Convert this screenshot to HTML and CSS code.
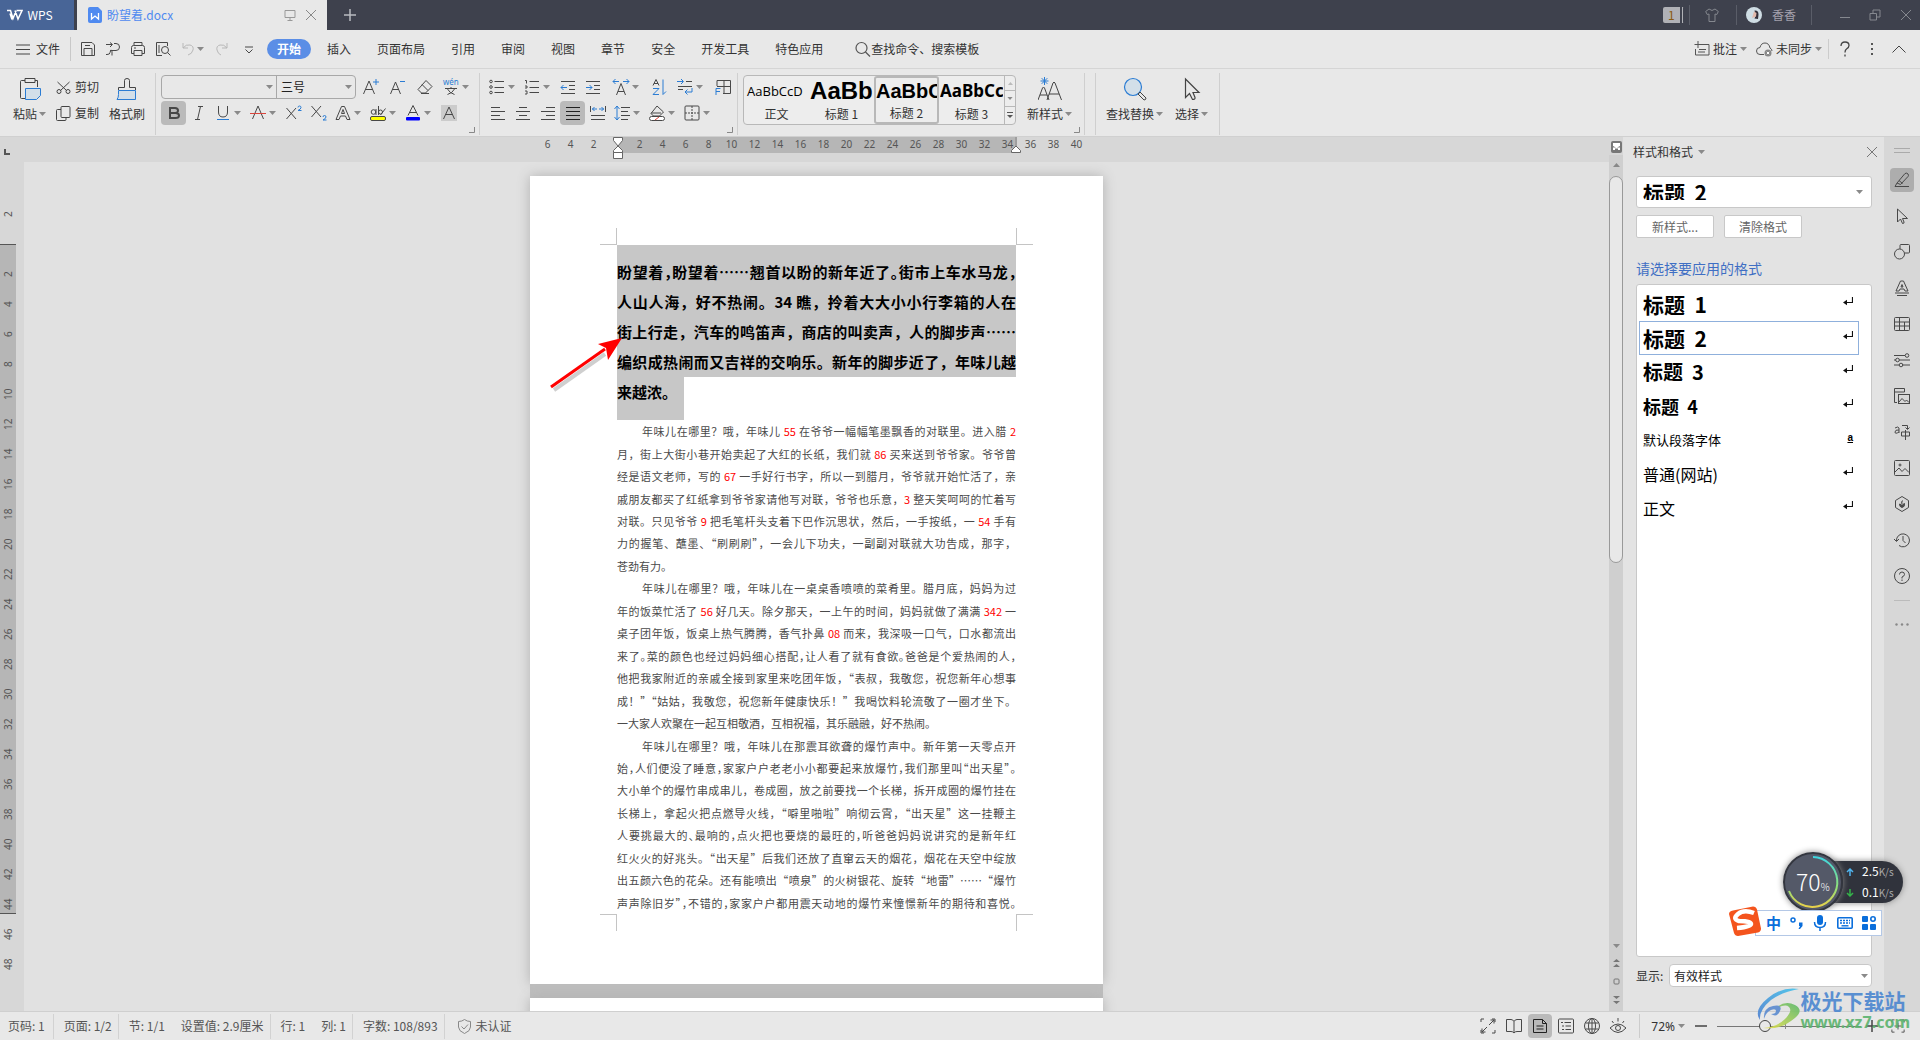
FILE: index.html
```html
<!DOCTYPE html>
<html lang="zh-CN">
<head>
<meta charset="utf-8">
<title>盼望着.docx - WPS</title>
<link rel="stylesheet" href="styles.css">
</head>
<body>
<svg class="defs" aria-hidden="true">
  <symbol id="caret" viewBox="0 0 7 4"><path d="M0 0h7L3.500 4z" fill="#8a8a8a"/></symbol>
  <symbol id="ret" viewBox="0 0 10 9"><path d="M9.500 0v5.500H2" fill="none" stroke="#111" stroke-width="1.200"/><path d="M0 5.500l4-2.800v5.600z" fill="#111"/></symbol>
  <symbol id="launch" viewBox="0 0 6 6"><path d="M5.500 0v5.500H0" fill="none" stroke="#888"/></symbol>
  <symbol id="cross" viewBox="0 0 12 12"><path d="M1 1l10 10M11 1L1 11" fill="none" stroke="currentColor"/></symbol>
</svg>

<header class="titlebar">
  <button class="wps"><svg width="16" height="12" viewBox="0 0 16 12"><path d="M0 1.500h3.500l2.500 8 3-7.500M3 4.500L5 10.500M8 1.500l3 8.500 4-8.500h-5.500" fill="none" stroke="#fff" stroke-width="1.500"/></svg>WPS</button>
  <div class="tab">
    <svg width="14" height="16" viewBox="0 0 14 16"><path d="M2 0h8l4 4v10a2 2 0 0 1-2 2H2a2 2 0 0 1-2-2V2a2 2 0 0 1 2-2z" fill="#4f8af0"/><path d="M3.500 6v6l3.500-3 3.500 3V6" fill="none" stroke="#fff" stroke-width="1.300"/></svg>
    <span class="name">盼望着.docx</span>
    <svg width="12" height="12" viewBox="0 0 12 12" fill="none" stroke="#999"><path d="M1 1.500h10v7H1zM6 8.500v2.500M3.500 11.500h5"/></svg>
    <button class="x" aria-label="关闭标签"><svg width="12" height="12"><use href="#cross"/></svg></button>
  </div>
  <button class="add" aria-label="新建"><svg width="12" height="12" viewBox="0 0 12 12"><path d="M6 0v12M0 6h12" stroke="#b8bac0" stroke-width="1.500"/></svg></button>
  <div class="sys">
    <span class="count">1</span>
    <i></i>
    <svg width="14" height="14" viewBox="0 0 14 14" fill="none" stroke="#85888f"><path d="M4 1L.700 3.500l1.500 3L4 6v7.500h6V6l1.800.500 1.500-3L10 1Q7 4 4 1z"/></svg>
    <i></i>
    <svg width="16" height="16" viewBox="0 0 16 16"><circle cx="8" cy="8" r="8" fill="#cfdde4"/><path d="M8.500 3.500q4-.500 4 4L12 12l-3.500-.500L9.500 9z" fill="#33303a"/><path d="M8 4.500l2.500 1.500-.5 3.500L6 11l1-3z" fill="#e2b9ab"/></svg>
    <span class="user">香香</span>
    <i></i>
    <button aria-label="最小化"><svg width="12" height="12" viewBox="0 0 12 12"><path d="M1 8.500h10" stroke="#85888f"/></svg></button>
    <button aria-label="还原"><svg width="12" height="12" viewBox="0 0 12 12" fill="none" stroke="#85888f"><path d="M1 4.500h6.500V11H1zM4 4V1h7v7H8"/></svg></button>
    <button aria-label="关闭"><svg width="12" height="12"><use href="#cross"/></svg></button>
  </div>
</header>

<nav class="menubar">
  <button class="file"><svg width="14" height="11" viewBox="0 0 14 11"><path d="M0 1h14M0 5.500h14M0 10h14" stroke="#444"/></svg>文件</button>
  <div class="quick">
    <button aria-label="保存"><svg viewBox="0 0 16 16"><path d="M1.500 1.500h10.500l2.500 2.500v10.500h-13zM4 14V7.500h8V14M5 4.500h5"/></svg></button>
    <button aria-label="输出"><svg viewBox="0 0 16 16"><path d="M1 3.500h6M5 1.500l2.500 2L5 6M9 2.500h2a3.500 3.500 0 0 1 0 7H7q-2 0-2 2t-3 2H1M5 9.500q2-1 2 1v4"/></svg></button>
    <button aria-label="打印"><svg viewBox="0 0 16 16"><path d="M4 4.500v-3h8v3M4 12.500H1.500v-6q0-2 2-2h9q2 0 2 2v6H12M4 9.500h8v5H4zM4 7h2"/></svg></button>
    <button aria-label="打印预览"><svg viewBox="0 0 16 16"><path d="M7 14.500H1.500v-13h11V5M4 4v8"/><circle cx="10" cy="9" r="3.500"/><path d="M12.500 11.500l3 3"/></svg></button>
    <button class="dim wide" aria-label="撤销"><svg viewBox="0 0 16 16"><path d="M3 2v5h5M3 7q3-4 7-3t3 5-5 5"/></svg><svg class="caret"><use href="#caret"/></svg></button>
    <button class="dim" aria-label="恢复"><svg viewBox="0 0 16 16"><path d="M13 2v5H8M13 7q-3-4-7-3t-3 5 4 5"/></svg></button>
    <button aria-label="更多"><svg viewBox="0 0 16 16"><path d="M4 6h8M4.500 8.500L8 12l3.500-3.500"/></svg></button>
  </div>
  <div class="menus">
    <button class="on">开始</button><button>插入</button><button>页面布局</button><button>引用</button><button>审阅</button><button>视图</button><button>章节</button><button>安全</button><button>开发工具</button><button>特色应用</button>
  </div>
  <button class="find"><svg width="16" height="16" viewBox="0 0 16 16" fill="none" stroke="#555" stroke-width="1.200"><circle cx="6.500" cy="7" r="5.500"/><path d="M10.500 11l4.500 4.500"/></svg>查找命令、搜索模板</button>
  <div class="right">
    <button><svg width="16" height="16" viewBox="0 0 16 16" fill="none" stroke="#555"><path d="M6 3.500h9v10.500H1.500V8M4 0v7M.500 3.500h7M4 11h7M5 8.500h7"/></svg>批注<svg class="caret"><use href="#caret"/></svg></button>
    <button><svg width="17" height="15" viewBox="0 0 17 15" fill="none" stroke="#555"><path d="M8 12.500H4a3.500 3.500 0 0 1 0-7Q5 1 9 1t5 5q2 1 2 3"/><circle cx="12" cy="11" r="3.500" fill="#888" stroke="none"/><path d="M10.800 9.800l2.400 2.400m0-2.400l-2.400 2.400" stroke="#fff"/></svg>未同步<svg class="caret"><use href="#caret"/></svg></button>
    <i></i>
    <button aria-label="帮助"><svg width="12" height="16" viewBox="0 0 12 16" fill="none" stroke="#444" stroke-width="1.300"><path d="M2 5q0-4 4-4t4 3.500q0 2-2.500 3.500Q6 9 6 11.500M6 13.500v2"/></svg></button>
    <button aria-label="更多选项"><svg width="4" height="14" viewBox="0 0 4 14" fill="#555"><path d="M1 1h2v2H1zM1 6h2v2H1zM1 11h2v2H1z"/></svg></button>
    <button aria-label="收起功能区"><svg width="14" height="8" viewBox="0 0 14 8" fill="none" stroke="#444"><path d="M.500 7.500L7 1l6.500 6.500"/></svg></button>
  </div>
</nav>

<section class="ribbon">
  <div class="group clip">
    <button class="big"><svg viewBox="0 0 24 24" fill="none" stroke="#444"><path d="M7 3.500H3.500q-1 0-1 1v16q0 1 1 1H7M17 3.500h2.500V10M7 1.500h10v4H7z"/><path d="M7.500 11.500h15v7l-4 4h-11z" fill="#d3dfe9" stroke="#2b7cd3"/></svg><span>粘贴<svg class="caret"><use href="#caret"/></svg></span></button>
    <div class="pair">
      <button><svg width="15" height="15" viewBox="0 0 15 15" fill="none" stroke="#444"><circle cx="3" cy="11.500" r="2"/><circle cx="12" cy="11.500" r="2"/><path d="M1.500 2l9 8.500M13.500 2l-9 8.500"/></svg>剪切</button>
      <button><svg width="15" height="15" viewBox="0 0 15 15" fill="none" stroke="#444"><rect x="5" y=".5" width="9" height="11" rx="1"/><path d="M5 3.500H1.500q-1 0-1 1v9q0 1 1 1H9q1 0 1-1v-2"/></svg>复制</button>
    </div>
    <button class="big"><svg viewBox="0 0 24 24" fill="none" stroke="#444"><path d="M3.500 13v-2.500h6v-7q0-2 2.500-2t2.500 2v7h6V13"/><path d="M3.500 13.500h17v9H2q1.500-2 1.500-5z" fill="#d3dfe9" stroke="#2b7cd3"/></svg><span>格式刷</span></button>
  </div>

  <div class="group font">
    <div class="row spaced">
      <div class="combo">
        <label class="pick face"><select aria-label="字体"><option></option></select><svg class="caret"><use href="#caret"/></svg></label>
        <label class="pick size"><select aria-label="字号"><option>三号</option></select><svg class="caret"><use href="#caret"/></svg></label>
      </div>
      <button aria-label="增大字号"><svg viewBox="0 0 16 16"><path d="M.500 15L6 2l5.500 13M2.500 10.500h7"/><path class="b" d="M13 0v6M10 3h6"/></svg></button>
      <button aria-label="减小字号"><svg viewBox="0 0 16 16"><path d="M.500 15L5.500 3l5 12M2.500 10.500h6.500"/><path class="b" d="M10 2.500h5"/></svg></button>
      <button aria-label="清除格式"><svg viewBox="0 0 16 16"><path d="M9 1.500l6 6-6.500 6.500h-4L1 10.500zM5 5.500l6 6M4 14.500h8"/></svg></button>
      <button class="wide" aria-label="拼音指南"><svg viewBox="0 0 16 16"><text x="0" y="6" class="pin">wén</text><path d="M2 9.500h12M8 8v1.500M4.500 10q2 4 7 5.500M11.500 10q-2 4-7 5.500"/></svg><svg class="caret"><use href="#caret"/></svg></button>
    </div>
    <div class="row">
      <button class="on" aria-label="加粗"><svg viewBox="0 0 16 16"><path d="M4 3h5q3 0 3 2.500T9 8H4zM4 8h5.500Q13 8 13 10.500T9.500 13H4z" stroke-width="2"/></svg></button>
      <button aria-label="倾斜"><svg viewBox="0 0 16 16"><path d="M7 1.500h5M4 14.500h5M9.500 1.500l-3 13"/></svg></button>
      <button class="wide" aria-label="下划线"><svg viewBox="0 0 16 16"><path d="M3.500 1v6q0 5 4.500 5t4.500-5V1"/><path class="b" d="M2 14.500h12"/></svg><svg class="caret"><use href="#caret"/></svg></button>
      <button class="wide" aria-label="删除线"><svg viewBox="0 0 16 16"><path d="M2.500 14L8 1l5.500 13"/><path d="M0 8.500h16" stroke="#d9453c"/></svg><svg class="caret"><use href="#caret"/></svg></button>
      <button aria-label="上标"><svg viewBox="0 0 16 16"><path d="M.500 3l9.500 11M10 3L.500 14"/><path class="b" d="M12 2.500q0-1.500 1.500-1.500T15 2.500t-3 3h3.500"/></svg></button>
      <button aria-label="下标"><svg viewBox="0 0 16 16"><path d="M.500 1L10 12M10 1L.500 12"/><path class="b" d="M12 12q0-1.500 1.500-1.500T15 12t-3 3h3.500"/></svg></button>
      <button class="wide" aria-label="文字效果"><svg viewBox="0 0 16 16"><path d="M1 14.500L6.500 1.500h3L15 14.500h-3L10.500 11h-5L4 14.500zM6.500 8.500h3L8 4.500z"/></svg><svg class="caret"><use href="#caret"/></svg></button>
      <button class="wide" aria-label="突出显示"><svg viewBox="0 0 16 16"><circle cx="3.500" cy="7" r="2.300"/><path d="M6 4v6M8.500 1v9M15.500 3.500l-5 6.500"/><circle cx="10.500" cy="7" r="2"/><rect x=".5" y="11.500" width="15" height="4" rx="1.500" fill="#ff0"/></svg><svg class="caret"><use href="#caret"/></svg></button>
      <button class="wide" aria-label="字体颜色"><svg viewBox="0 0 16 16"><path d="M3 10.500L8 .500l5 10M4.500 7.500h7"/><rect x="1" y="12" width="14" height="3.500" rx="1" fill="#00f" stroke="none"/></svg><svg class="caret"><use href="#caret"/></svg></button>
      <button aria-label="字符底纹"><svg viewBox="0 0 16 16"><path d="M0 0h16v16H0z" fill="#ccc" stroke="none"/><path d="M2.500 14L8 2l5.500 12M4.500 9.500h7"/></svg></button>
    </div>
    <svg class="launch"><use href="#launch"/></svg>
  </div>

  <div class="group para">
    <div class="row cluster">
      <div class="row">
        <button class="wide" aria-label="项目符号"><svg viewBox="0 0 16 16"><circle cx="2" cy="2.500" r="1.300"/><circle cx="2" cy="8" r="1.300"/><circle cx="2" cy="13.500" r="1.300"/><path d="M5.500 2.500H15M5.500 8.500H15M5.500 13.500H15"/></svg><svg class="caret"><use href="#caret"/></svg></button>
        <button class="wide" aria-label="编号"><svg viewBox="0 0 16 16"><path d="M1 1.500h1.500v3M1 7h2v2H1M1 12h2v3H1M5.500 2.500H15M5.500 8.500H15M5.500 13.500H15"/></svg><svg class="caret"><use href="#caret"/></svg></button>
        <button aria-label="减少缩进"><svg viewBox="0 0 16 16"><path d="M1 2.500h14M9 6.500h6M9 10.500h6M1 14.500h14"/><path class="b" d="M1 8.500h6M3.500 6L1 8.500 3.500 11"/></svg></button>
        <button aria-label="增加缩进"><svg viewBox="0 0 16 16"><path d="M1 2.500h14M9 6.500h6M9 10.500h6M1 14.500h14"/><path class="b" d="M1 8.500h6M4.500 6L7 8.500 4.500 11"/></svg></button>
      </div>
      <div class="row spaced">
        <button class="wide" aria-label="中文版式"><svg viewBox="0 0 16 16"><path d="M3.500 16L8 4.500 12.500 16M5 12.500h6"/><path class="b" d="M0 2.500h6M2.500 0L0 2.500 2.500 5M10 2.500h6M13.500 0L16 2.500 13.500 5"/></svg><svg class="caret"><use href="#caret"/></svg></button>
        <button aria-label="排序"><svg viewBox="0 0 16 16"><path d="M2 6.500L5 .500l3 6M3 4.500h4"/><path class="b" d="M2 9.500h6l-6 6h6M12 .500v15l3-3"/></svg></button>
        <button class="wide" aria-label="显示标记"><svg viewBox="0 0 16 16"><path d="M9 2.500h6M1 7.500h14M1 10.500h5"/><path class="b" d="M0 2.500h6M4 0l2.500 2.500L4 5M15 9v4H8M10.500 10.500L8 13l2.500 2.500"/></svg><svg class="caret"><use href="#caret"/></svg></button>
        <button aria-label="制表位"><svg viewBox="0 0 16 16"><path d="M2 7V1.500h13.500v13H8M9 1v13M2 7.500h13"/><path class="b" d="M1 16V9.500h4.500M1 12.500h4"/></svg></button>
      </div>
    </div>
    <div class="row">
      <button aria-label="左对齐"><svg viewBox="0 0 16 16"><path d="M1 2.500h9M1 6.500h14M1 10.500h9M1 14.500h14"/></svg></button>
      <button aria-label="居中"><svg viewBox="0 0 16 16"><path d="M4 2.500h8M1 6.500h14M4 10.500h8M1 14.500h14"/></svg></button>
      <button aria-label="右对齐"><svg viewBox="0 0 16 16"><path d="M6 2.500h9M1 6.500h14M6 10.500h9M1 14.500h14"/></svg></button>
      <button class="on" aria-label="两端对齐"><svg viewBox="0 0 16 16"><path d="M1 2.500h14M1 6.500h14M1 10.500h14M1 14.500h14" stroke="#222"/></svg></button>
      <button aria-label="分散对齐"><svg viewBox="0 0 16 16"><path d="M.500 1v6M15.500 1v6M1 10.500h14M1 14.500h14"/><path class="b" d="M2 4h5M4.500 2L2.500 4l2 2M9 4h5M11.500 2l2 2-2 2"/></svg></button>
      <button class="wide" aria-label="行距"><svg viewBox="0 0 16 16"><path d="M7 2.500h9M7 6.500h7M7 10.500h9M7 14.500h7"/><path class="b" d="M3 1v14M.500 4L3 1l2.500 3M.500 12L3 15l2.500-3"/></svg><svg class="caret"><use href="#caret"/></svg></button>
      <button class="wide" aria-label="底纹"><svg viewBox="0 0 16 16"><path d="M8 1l6.500 6-4 4H4.500L2 8.500zM2 8h10"/><rect x=".5" y="11.500" width="15" height="4" rx="2" fill="#fff"/><path d="M6 15l4-3" stroke="#d9453c"/></svg><svg class="caret"><use href="#caret"/></svg></button>
      <button class="wide" aria-label="边框"><svg viewBox="0 0 16 16"><rect x="1" y="1" width="14" height="14" rx="1"/><path d="M8 1v14M1 8h14" stroke-dasharray="2 1"/></svg><svg class="caret"><use href="#caret"/></svg></button>
    </div>
    <svg class="launch"><use href="#launch"/></svg>
  </div>

  <div class="group styles">
    <div class="gallery">
      <button class="s0"><b>AaBbCcD</b><span>正文</span></button>
      <button class="s1"><b>AaBb</b><span>标题 1</span></button>
      <button class="s2 on"><b>AaBbC</b><span>标题 2</span></button>
      <button class="s3"><b>AaBbCc</b><span>标题 3</span></button>
      <div class="spin">
        <button aria-label="上翻"><svg width="5" height="3" viewBox="0 0 7 4"><path d="M0 4h7L3.500 0z" fill="#bbb"/></svg></button>
        <button aria-label="下翻"><svg width="6" height="3"><use href="#caret"/></svg></button>
        <button aria-label="展开样式"><svg width="6" height="6" viewBox="0 0 6 6"><path d="M0 .500h6" stroke="#555"/><path d="M0 3h6L3 6z" fill="#555"/></svg></button>
      </div>
    </div>
    <button class="big"><svg viewBox="0 0 24 24" fill="none" stroke="#444"><path d="M0 23l4.500-12q1-2 2 0L11 23M2 18h7M9 23l6-17q1-2 2 0l6.500 17M11 17h10"/><path d="M6.500 0v8M2.500 4h8M3.700 1.200l5.600 5.600M9.300 1.200L3.700 6.800" stroke="#2b7cd3"/></svg><span>新样式<svg class="caret"><use href="#caret"/></svg></span></button>
    <svg class="launch"><use href="#launch"/></svg>
  </div>

  <div class="group edit">
    <button class="big"><svg viewBox="0 0 24 24"><circle cx="10" cy="10" r="8.500" fill="#d3dfe9" stroke="#2b7cd3" stroke-width="1.200"/><path d="M15 17l2-2 6 6q0 2-2 2z" fill="none" stroke="#444"/></svg><span>查找替换<svg class="caret"><use href="#caret"/></svg></span></button>
    <button class="big"><svg viewBox="0 0 24 24" fill="none" stroke="#444" stroke-width="1.200"><path d="M5.500 2v18.500l4-4 3 6q3 0 2.500-2l-2-5H19z"/></svg><span>选择<svg class="caret"><use href="#caret"/></svg></span></button>
  </div>
</section>

<main class="work">
  <aside class="vruler">
    <svg class="stop" width="6" height="6" viewBox="0 0 6 6"><path d="M1 0v5h5" fill="none" stroke="#555" stroke-width="2"/></svg>
    <ol><li>2</li><li></li><li>2</li><li>4</li><li>6</li><li>8</li><li>10</li><li>12</li><li>14</li><li>16</li><li>18</li><li>20</li><li>22</li><li>24</li><li>26</li><li>28</li><li>30</li><li>32</li><li>34</li><li>36</li><li>38</li><li>40</li><li>42</li><li>44</li><li>46</li><li>48</li></ol>
  </aside>

  <div class="canvas">
    <div class="hruler">
      <ol><li>6</li><li>4</li><li>2</li><li></li><li>2</li><li>4</li><li>6</li><li>8</li><li>10</li><li>12</li><li>14</li><li>16</li><li>18</li><li>20</li><li>22</li><li>24</li><li>26</li><li>28</li><li>30</li><li>32</li><li>34</li><li>36</li><li>38</li><li>40</li></ol>
      <svg class="ind left" width="10" height="22" viewBox="0 0 10 22" fill="#fff" stroke="#666"><path d="M.500.500h9v3L5 9 .500 3.500zM5 9l4.500 4.500v2h-9v-2zM.500 15.500h9v6h-9z"/></svg>
      <svg class="ind end" width="10" height="16" viewBox="0 0 10 16" fill="#fff" stroke="#666"><path d="M5 0v9M5 9l4.500 4.500v2h-9v-2z"/></svg>
    </div>
    <div class="pages">
      <article class="page">
        <div class="marks top"><span></span><span></span></div>
        <h1>
          <span class="tight">盼望着，盼望着……翘首以盼的新年近了。街市上车水马龙，</span>
          <span>人山人海，好不热闹。34 瞧，拎着大大小小行李箱的人在</span>
          <span>街上行走，汽车的鸣笛声，商店的叫卖声，人的脚步声……</span>
          <span>编织成热闹而又吉祥的交响乐。新年的脚步近了，年味儿越</span>
          <span class="last">来越浓。</span>
        </h1>
        <div class="text">
          <span class="in">年味儿在哪里？哦，年味儿 <em>55</em> 在爷爷一幅幅笔墨飘香的对联里。进入腊 <em>2</em></span>
          <span>月，街上大街小巷开始卖起了大红的长纸，我们就 <em>86</em> 买来送到爷爷家。爷爷曾</span>
          <span>经是语文老师，写的 <em>67</em> 一手好行书字，所以一到腊月，爷爷就开始忙活了，亲</span>
          <span>戚朋友都买了红纸拿到爷爷家请他写对联，爷爷也乐意，<em>3</em> 整天笑呵呵的忙着写</span>
          <span>对联。只见爷爷 <em>9</em> 把毛笔杆头支着下巴作沉思状，然后，一手按纸，一 <em>54</em> 手有</span>
          <span>力的握笔、蘸墨、“刷刷刷”，一会儿下功夫，一副副对联就大功告成，那字，</span>
          <span class="last">苍劲有力。</span>
          <span class="in">年味儿在哪里？哦，年味儿在一桌桌香喷喷的菜肴里。腊月底，妈妈为过</span>
          <span>年的饭菜忙活了 <em>56</em> 好几天。除夕那天，一上午的时间，妈妈就做了满满 <em>342</em> 一</span>
          <span>桌子团年饭，饭桌上热气腾腾，香气扑鼻 <em>08</em> 而来，我深吸一口气，口水都流出</span>
          <span class="tight">来了。菜的颜色也经过妈妈细心搭配，让人看了就有食欲。爸爸是个爱热闹的人，</span>
          <span>他把我家附近的亲戚全接到家里来吃团年饭，“表叔，我敬您，祝您新年心想事</span>
          <span>成！”“姑姑，我敬您，祝您新年健康快乐！”我喝饮料轮流敬了一圈才坐下。</span>
          <span class="last">一大家人欢聚在一起互相敬酒，互相祝福，其乐融融，好不热闹。</span>
          <span class="in">年味儿在哪里？哦，年味儿在那震耳欲聋的爆竹声中。新年第一天零点开</span>
          <span class="tight">始，人们便没了睡意，家家户户老老小小都要起来放爆竹，我们那里叫“出天星”。</span>
          <span>大小单个的爆竹串成串儿，卷成圈，放之前要找一个长梯，拆开成圈的爆竹挂在</span>
          <span>长梯上，拿起火把点燃导火线，“噼里啪啦”响彻云霄，“出天星”这一挂鞭主</span>
          <span class="tight">人要挑最大的、最响的，点火把也要烧的最旺的，听爸爸妈妈说讲究的是新年红</span>
          <span>红火火的好兆头。“出天星”后我们还放了直窜云天的烟花，烟花在天空中绽放</span>
          <span>出五颜六色的花朵。还有能喷出“喷泉”的火树银花、旋转“地雷”……“爆竹</span>
          <span class="tight">声声除旧岁”，不错的，家家户户都用震天动地的爆竹来憧憬新年的期待和喜悦。</span>
        </div>
        <div class="marks bottom"><span></span><span></span></div>
        <svg class="arrow" width="80" height="60" viewBox="0 0 80 60"><path d="M2 51L53 15" stroke="#777" stroke-width="4" transform="translate(2 3)" opacity=".35"/><path d="M1 51L55 13" stroke="#f00" stroke-width="3"/><path d="M72 2L48 8l8 4 2 12z" fill="#f00"/></svg>
      </article>
      <div class="break"></div>
      <article class="page next"></article>
    </div>
  </div>

  <div class="scroll">
    <svg class="rul" width="11" height="12" viewBox="0 0 11 12"><rect width="11" height="12" rx="2" fill="#777"/><path d="M2 2h7v3L6 6.500h3V9H7V7.500H4V9H2V6.500h3L2 5z" fill="#fff"/></svg>
    <div class="track">
      <svg width="7" height="4" viewBox="0 0 7 4"><path d="M0 4h7L3.500 0z" fill="#888"/></svg>
      <div class="thumb"></div>
      <div class="jump">
        <svg width="7" height="4"><use href="#caret"/></svg>
        <svg width="7" height="8" viewBox="0 0 7 8" fill="#777"><path d="M0 3h7L3.500 0zM0 8h7L3.500 5z"/></svg>
        <svg width="7" height="7" viewBox="0 0 7 7" fill="none" stroke="#777"><rect x="1" y="1" width="5" height="5" rx="1"/></svg>
        <svg width="7" height="8" viewBox="0 0 7 8" fill="#777"><path d="M0 0h7L3.500 3zM0 5h7L3.500 8z"/></svg>
      </div>
    </div>
  </div>

  <aside class="panel">
    <header><span>样式和格式</span><svg class="caret"><use href="#caret"/></svg><button aria-label="关闭窗格"><svg width="12" height="12"><use href="#cross"/></svg></button></header>
    <label class="pick current"><select aria-label="当前样式"><option>标题&nbsp; 2</option></select><svg class="caret"><use href="#caret"/></svg></label>
    <div class="acts"><button>新样式...</button><button>清除格式</button></div>
    <h2>请选择要应用的格式</h2>
    <ul>
      <li class="h1">标题&nbsp; 1<svg><use href="#ret"/></svg></li>
      <li class="h2 sel">标题&nbsp; 2<svg><use href="#ret"/></svg></li>
      <li class="h3">标题&nbsp; 3<svg><use href="#ret"/></svg></li>
      <li class="h4">标题&nbsp; 4<svg><use href="#ret"/></svg></li>
      <li class="df">默认段落字体<u>a</u></li>
      <li>普通(网站)<svg><use href="#ret"/></svg></li>
      <li>正文<svg><use href="#ret"/></svg></li>
    </ul>
    <div class="show"><label for="show">显示:</label><span class="pick"><select id="show"><option>有效样式</option></select><svg class="caret"><use href="#caret"/></svg></span></div>
  </aside>

  <nav class="rail">
    <svg class="grip" width="16" height="5" viewBox="0 0 16 5"><path d="M0 .500h16M0 4.500h16" stroke="#aaa"/></svg>
    <button class="on" aria-label="样式和格式"><svg viewBox="0 0 16 16"><path d="M3 11L11 1.500q2-1 3 .500t0 2.500L6.500 12.500zM3 11l-2 3.500h14M5 8.500l3.500 3"/></svg></button>
    <button aria-label="选择窗格"><svg viewBox="0 0 16 16"><path d="M3.500 1v13l3-3 2 4.500q2 0 1.500-1.500L8.500 10.500h5z"/></svg></button>
    <button aria-label="形状"><svg viewBox="0 0 16 16"><circle cx="5.500" cy="10" r="5"/><path d="M6 5V1.500q0-1 1-1h7.500q1 0 1 1V8q0 1-1 1h-4"/></svg></button>
    <button aria-label="艺术字"><svg viewBox="0 0 16 16"><path d="M2 11L6.500 1h3L14 11h-3l-1-2H6l-1 2zM7 7h2L8 4.500zM1 13h14M3 15.500h10"/></svg></button>
    <button aria-label="表格"><svg viewBox="0 0 16 16"><rect x=".5" y="1.500" width="15" height="13" rx="1"/><path d="M.500 6h15M.500 10h15M5.500 1.500v13M10.500 6v8.500"/></svg></button>
    <button aria-label="设置"><svg viewBox="0 0 16 16"><path d="M0 3.500h11M0 8h2M5 8h11M0 13h5M8 13h8"/><circle cx="13" cy="3.500" r="1.800"/><circle cx="3.500" cy="8" r="1.800"/><circle cx="7" cy="13" r="1.800"/></svg></button>
    <button aria-label="素材"><svg viewBox="0 0 16 16"><path d="M3 14.500H.500V.500h10V4M.500 4h10"/><rect x="4.500" y="6.500" width="11" height="9"/><path d="M5 14l3-3.500 3 3 1.500-1.500 2.500 2.500"/></svg></button>
    <button aria-label="翻译"><svg viewBox="0 0 16 16"><path d="M1 4q3-2 4 0v5M5 6Q1 5.500 1 8t4 0M8 1.500h5.500V5M11.500 3.500l2 2 2-2M7.500 8h8v4h-8zM11.500 6v10"/></svg></button>
    <button aria-label="图片"><svg viewBox="0 0 16 16"><rect x=".5" y=".5" width="15" height="15" rx="1"/><path d="M1 12l4-4 3 3.500 3-3 4 4"/><circle cx="6" cy="5" r="1"/></svg></button>
    <button aria-label="稻壳"><svg viewBox="0 0 16 16"><path d="M8 .500l6.500 4v7L8 15.500l-6.500-4v-7z"/><path d="M5.500 8q2.500 0 2.500 3Q8 8 10.500 7.500q.500 3.500-2.500 4Q5.500 11 5.500 8zM8 8q-1-2 .500-3.500" fill="#555"/></svg></button>
    <button aria-label="历史"><svg viewBox="0 0 16 16"><path d="M2.500 9A6.500 6.500 0 1 1 5 13.500M0 7l2.500 2.500L5 7M9 4v4.500l2.500 2.500"/></svg></button>
    <button aria-label="帮助中心"><svg viewBox="0 0 16 16"><circle cx="8" cy="8" r="7.500"/><path d="M5.500 6.500Q5.500 4 8 4t2.500 2.500Q10.500 8 8 9v1.500M8 11.500v1.500"/></svg></button>
    <hr>
    <svg width="14" height="3" viewBox="0 0 14 3" fill="#888"><circle cx="1.500" cy="1.500" r="1.200"/><circle cx="7" cy="1.500" r="1.200"/><circle cx="12.500" cy="1.500" r="1.200"/></svg>
  </nav>
</main>

<footer class="status">
  <span class="c1">页码: 1</span><span>页面: 1/2</span><span>节: 1/1<b>设置值: 2.9厘米</b></span><span>行: 1<b>列: 1</b></span><span>字数: 108/893</span>
  <span class="cert"><svg width="13" height="15" viewBox="0 0 13 15" fill="none" stroke="#888"><path d="M.500 2.500Q4 2.500 6.500.500 9 2.500 12.500 2.500V8q0 4-6 6.500Q.500 12 .500 8zM3.500 7.500l2.500 2.500 4-4.500"/></svg>未认证</span>
  <div class="views">
    <button aria-label="全屏"><svg viewBox="0 0 16 16"><path d="M1 4V1h3M12 1h3v3M15 12v3h-3M4 15H1v-3M9 7l5-5M10.500 2H14v3.500M7 9l-5 5M5.500 14H2v-3.500"/></svg></button>
    <button aria-label="阅读版式"><svg viewBox="0 0 16 16"><path d="M8 3.500v11M8 3.500Q7 1.500 5 1.500H.500v12H5q2 0 3 1.500 1-1.500 3-1.500h4.500v-12H11q-2 0-3 2z"/></svg></button>
    <button class="on" aria-label="页面视图"><svg viewBox="0 0 16 16"><path d="M1.500 1.500h9l4 4v9h-13zM10.500 1.500v4h4M4.500 8h7M4.500 11h7" stroke="#222"/></svg></button>
    <button aria-label="大纲"><svg viewBox="0 0 16 16"><rect x=".5" y="1" width="15" height="14" rx="1"/><path d="M3 4.500h2M6.500 4.500H13M4 8h2M7.500 8H13M4 11.500h2M7.500 11.500H13"/></svg></button>
    <button aria-label="Web版式"><svg viewBox="0 0 16 16"><circle cx="8" cy="8" r="7.500"/><ellipse cx="8" cy="8" rx="3.500" ry="7.500"/><path d="M1.500 5h13M1.500 11h13M8 .500v15"/></svg></button>
    <button aria-label="护眼模式"><svg viewBox="0 0 16 16"><path d="M0 10q8-8 16 0-8 9-16 0zM2 3l1.500 2M8 0v3.500M14 3l-1.500 2"/><circle cx="8" cy="10" r="2.500"/></svg></button>
  </div>
  <div class="zoom">
    <button class="pct">72%<svg class="caret"><use href="#caret"/></svg></button>
    <button aria-label="缩小"><svg width="12" height="12" viewBox="0 0 12 12"><path d="M0 6h12" stroke="#444" stroke-width="1.500"/></svg></button>
    <input type="range" aria-label="缩放" min="0" max="100" value="32">
    <button aria-label="放大"><svg width="12" height="12" viewBox="0 0 12 12"><path d="M0 6h12M6 0v12" stroke="#444" stroke-width="1.500"/></svg></button>
    <button class="fit" aria-label="最佳显示比例"><svg width="14" height="14" viewBox="0 0 16 16" fill="none" stroke="#444"><path d="M1 4V1h3M12 1h3v3M15 12v3h-3M4 15H1v-3M4 8h8M8 4v8"/></svg></button>
  </div>
</footer>

<div class="meter">
  <dl><dt><svg width="8" height="8" viewBox="0 0 8 8" fill="none" stroke="#4fb4ee" stroke-width="1.500"><path d="M4 8V1M1 4l3-3 3 3"/></svg></dt><dd>2.5<small>K/s</small></dd><dt><svg width="8" height="8" viewBox="0 0 8 8" fill="none" stroke="#35b34a" stroke-width="1.500"><path d="M4 0v7M1 4l3 3 3-3"/></svg></dt><dd>0.1<small>K/s</small></dd></dl>
  <div class="dial">
    <svg width="60" height="60" viewBox="0 0 60 60" fill="none" stroke-width="2"><defs><linearGradient id="ring" x1="0" y1="0" x2="0" y2="1"><stop offset="0" stop-color="#3fd6e0"/><stop offset=".6" stop-color="#8fe07a"/><stop offset="1" stop-color="#e8d14a"/></linearGradient></defs><circle cx="30" cy="30" r="29" fill="#545968" stroke="#33363f"/><path d="M30 5a25 25 0 1 1-24 34" stroke="url(#ring)"/></svg>
    <span>70<small>%</small></span>
  </div>
</div>

<div class="ime">
  <svg class="sogou" width="32" height="30" viewBox="0 0 32 30"><path d="M4 4.500L24 .500q3 0 4 3l4 19q0 3-3 4L9 30q-3 0-4-3L0 8q0-3 4-3.500z" fill="#f4541d"/><path d="M25 7Q15 3 9 8t1 7q12 0 12 3t-14 4" fill="none" stroke="#fff" stroke-width="4.500"/></svg>
  <b>中</b>
  <svg width="14" height="14" viewBox="0 0 14 14"><circle cx="3" cy="4" r="2" fill="none" stroke="#0a6edb" stroke-width="1.500"/><path d="M9 6.500h3.500V10L10 13H8.500l1.500-3H9z" fill="#0a6edb"/></svg>
  <svg width="14" height="16" viewBox="0 0 14 16"><rect x="4" width="6" height="10" rx="3" fill="#0a6edb"/><path d="M1.500 7q0 5.500 5.500 5.500T12.500 7M7 12v4" fill="none" stroke="#0a6edb" stroke-width="1.500"/></svg>
  <svg width="16" height="12" viewBox="0 0 16 12"><rect x=".8" y=".8" width="14.400" height="10.400" rx="1" fill="none" stroke="#0a6edb" stroke-width="1.600"/><path d="M3 3.500h10M3 6h10" stroke="#0a6edb" stroke-width="1.400" stroke-dasharray="2 1"/><path d="M4.500 8.800h7" stroke="#0a6edb" stroke-width="1.400"/></svg>
  <svg width="14" height="14" viewBox="0 0 14 14" fill="#0a6edb"><rect width="6" height="6" rx="1"/><rect y="8" width="6" height="6" rx="1"/><rect x="8" y="8" width="6" height="6" rx="1"/><circle cx="11" cy="3" r="2.200" fill="none" stroke="#0a6edb" stroke-width="1.600"/></svg>
</div>

<div class="brand">
  <svg width="44" height="42" viewBox="0 0 44 42"><defs><linearGradient id="sw" x1="0" y1="1" x2="1" y2="0"><stop offset="0" stop-color="#4d7fd0"/><stop offset="1" stop-color="#43c3ec"/></linearGradient><linearGradient id="gr" x1="0" y1="1" x2="1" y2="0"><stop offset="0" stop-color="#e8e04a"/><stop offset="1" stop-color="#58b86a"/></linearGradient></defs><path d="M43 1Q27-2 12 10-3 22 4 32 3 22 15 12 26 4 43 1z" fill="url(#sw)"/><path d="M7 40q14-1 22-9t4-12-15 3q10-11 21-5t-4 16Q24 42 7 40z" fill="url(#gr)"/><path d="M8 31q-1-11 9-13t7 5-9 3q5 0 5-3t-5-1-7 9z" fill="#5b8bd0"/></svg>
  <p><b>极光下载站</b><a href="#">www.xz7.com</a></p>
</div>
</body>
</html>
```
FILE: styles.css
```css
* { box-sizing: border-box; }
body {
  margin: 0;
  height: 100vh;
  display: flex;
  flex-direction: column;
  overflow: hidden;
  position: relative;
  background: #e8e8e8;
  color: #333;
  font: 12px/16px "Noto Sans CJK SC", sans-serif;
}
button {
  display: flex;
  align-items: center;
  justify-content: center;
  padding: 0;
  border: 0;
  background: none;
  color: inherit;
  font: inherit;
  white-space: nowrap;
}
svg { display: block; flex: none; }
ol, ul, p, h1, h2, dl, dd { margin: 0; padding: 0; list-style: none; }
.defs { position: absolute; width: 0; height: 0; }
.caret { width: 7px; height: 4px; }

/* title bar */
.titlebar { display: flex; height: 30px; flex: none; background: #3e414d; }
.wps { width: 74px; gap: 4px; background: #486597; color: #fff; margin-right: 3px; padding-right: 14px; }
.tab { width: 250px; display: flex; align-items: center; padding: 0 10px 0 11px; gap: 5px; background: #e8e8e8; color: #888; }
.tab .name { flex: 1; color: #4f8af0; }
.tab .x { margin-left: 4px; }
.add { width: 46px; }
.sys { margin-left: auto; display: flex; align-items: center; padding-right: 8px; color: #85888f; }
.sys i { width: 1px; height: 20px; background: #5a5d68; margin: 0 10px 0 20px; }
.sys i:first-of-type { margin: 0 15px 0 4px; }
.sys i:nth-of-type(2) { margin: 0 9px 0 17px; }
.sys i:nth-of-type(3) { margin: 0 18px 0 15px; }
.sys button { width: 30px; }
.sys button:last-child { width: 12px; margin-left: 10px; }
.count { width: 22px; height: 16px; padding-left: 5px; border-radius: 2px; border-right: 5px double #3e414d; background: #b0b1b6; color: #8a5a10; }
.user { margin-left: 10px; color: #a3a0ac; }

/* menu bar */
.menubar { display: flex; align-items: center; height: 39px; flex: none; padding: 0 14px 0 16px; border-bottom: 1px solid #d5d5d5; }
.file { gap: 6px; height: 24px; padding-right: 10px; border-right: 1px solid #c8c8c8; }
.quick { display: flex; padding-left: 4px; }
.quick button { width: 25px; }
.quick .wide { width: 34px; gap: 1px; }
.quick button:last-child { margin-left: 2px; }
.quick svg:not(.caret), .row button svg:not(.caret), .rail button svg, .views svg { width: 16px; height: 16px; fill: none; stroke: #484848; overflow: visible; }
.quick .dim svg:not(.caret) { stroke: #b8b8b8; }
.menus { display: flex; margin-left: 6px; gap: 6px; }
.menus button { height: 20px; padding: 0 10px; border-radius: 10px; }
.menus .on { background: #5b8ee6; color: #fff; font-weight: bold; }
.find { margin-left: 22px; }
.right { margin-left: auto; display: flex; align-items: center; gap: 12px; }
.right button { gap: 3px; }
.right button:first-child { margin-right: -3px; }
.right i { width: 1px; height: 20px; margin: 0 -4px 0 -6px; background: #ccc; }
.right button:nth-of-type(n+3) { width: 15px; }

/* ribbon */
.ribbon { display: flex; height: 68px; flex: none; border-bottom: 1px solid #d0d0d0; padding-top: 4px; }
.group { position: relative; display: flex; height: 62px; padding-top: 2px; border-right: 1px solid #cfcfcf; }
.launch { position: absolute; right: 4px; bottom: 2px; width: 6px; height: 6px; }
.big { flex-direction: column; justify-content: flex-start; height: 50px; padding-top: 2px; gap: 5px; }
.big > svg { width: 24px; height: 24px; }
.big span { display: flex; align-items: center; gap: 2px; }
.clip { padding-left: 13px; padding-right: 10px; gap: 10px; }
.pair { display: grid; grid-template-rows: 24px 24px; gap: 2px; }
.pair button { gap: 4px; }
.font, .para { flex-direction: column; gap: 2px; padding-left: 5px; }
.font { padding-right: 5px; }
.para { padding-right: 2px; }
.row { display: flex; height: 24px; }
.row.spaced { gap: 2px; }
.row.cluster { gap: 4px; }
.row button { width: 25px; border-radius: 4px; }
.row .wide { width: 35px; justify-content: flex-start; padding-left: 4px; gap: 3px; }
.row .on { background: #bababa; }
.row button .b { stroke: #2b7cd3; }
.pin { font: 8px "Noto Sans", sans-serif; fill: #2b7cd3; stroke: none; }
.pick { display: grid; align-items: center; justify-items: end; }
.pick > * { grid-area: 1 / 1; }
.pick select { appearance: none; width: 100%; height: 100%; border: 0; background: none; padding: 0 20px 0 4px; color: #222; font: inherit; outline: 0; }
.pick .caret { margin-right: 3px; pointer-events: none; }
.combo { display: flex; width: 195px; height: 24px; border: 1px solid #a8a8a8; border-radius: 4px; }
.face { width: 115px; border-right: 1px solid #a8a8a8; }
.size { flex: 1; }
.styles { padding-left: 5px; padding-right: 12px; gap: 11px; }
.gallery { display: flex; width: 273px; height: 50px; border: 1px solid #b8b8b8; border-radius: 4px; background: #ededed; }
.gallery > button { width: 65px; flex-direction: column; justify-content: flex-end; overflow: hidden; border: 1px solid transparent; border-radius: 3px; }
.gallery > .on { border: 2px solid #b8b8b8; }
.gallery b { display: flex; align-items: center; height: 30px; width: 100%; overflow: hidden; color: #000; font-family: "Liberation Sans", sans-serif; }
.gallery > .s0 b { font: 13px "Open Sans", sans-serif; padding-left: 2px; }
.gallery .s1 b { font-size: 24px; }
.gallery .s2 b { font-size: 20px; height: 28px; }
.gallery .s3 b { font-size: 17px; font-family: "Noto Sans", sans-serif; }
.gallery span { height: 18px; }
.spin { flex: 1; display: grid; border-left: 1px solid #b8b8b8; }
.spin button + button { border-top: 1px solid #b8b8b8; }
.edit { margin-left: 10px; border-left: 1px solid #cfcfcf; padding-left: 10px; padding-right: 11px; gap: 12px; }

/* work area */
.work { flex: 1; min-height: 0; display: flex; overflow: hidden; }
.vruler { width: 24px; flex: none; background: #d7d7d7; overflow: hidden; padding-top: 12px; color: #555; font: 10px/12px "Noto Sans", sans-serif; }
.stop { margin-left: 4px; }
.vruler ol { margin-top: 44px; width: 16px; background: linear-gradient(#d7d7d7 45px, #555 45px, #555 46px, #b6b6b6 46px, #b6b6b6 714px, #555 714px, #555 715px, #d7d7d7 715px); }
.vruler li { height: 30px; width: 16px; display: flex; align-items: center; justify-content: center; writing-mode: vertical-rl; transform: rotate(180deg); }
.canvas { flex: 1; min-width: 0; background: #e1e1e1; display: flex; flex-direction: column; }
.hruler { position: relative; display: flex; justify-content: center; height: 25px; flex: none; background: #d7d7d7; }
.hruler ol { width: 573px; height: 16px; display: flex; padding-left: 6px; background: linear-gradient(90deg, #d7d7d7 87px, #b6b6b6 87px, #b6b6b6 485px, #d7d7d7 485px); color: #555; font: 10px/15px "Noto Sans", sans-serif; }
.hruler li { width: 23px; text-align: center; }
.ind { position: absolute; top: 0; left: 50%; }
.ind.left { margin-left: -204px; }
.ind.end { margin-left: 194px; }
.pages { flex: 1; min-height: 0; padding-top: 14px; display: flex; flex-direction: column; align-items: center; }
.page { position: relative; width: 573px; height: 808px; flex: none; background: #fff; padding: 52px 87px 0; box-shadow: 0 0 12px #b0b0b0; }
.break { width: 573px; height: 14px; flex: none; background: #bdbdbd; position: relative; }
.page.next { height: 100px; }
.marks { display: flex; justify-content: space-between; margin: 0 -17px; }
.marks span { width: 17px; height: 17px; border: 0 solid #c4c4c4; border-bottom-width: 1px; }
.marks span:first-child { border-right-width: 1px; }
.marks span:last-child { border-left-width: 1px; }
.marks.bottom span { border-bottom-width: 0; border-top-width: 1px; }
.page h1 { color: #000; font: bold 15px/30px "Noto Sans CJK SC", sans-serif; }
.page h1 span, .text span { display: block; white-space: nowrap; text-align: justify; text-align-last: justify; }
.page h1 span { background: #c7c7c7; }
.page h1 span:first-child { padding-top: 12px; }
.page h1 .last { width: 67px; padding-bottom: 13px; text-align-last: left; }
.text { display: grid; grid-auto-rows: 1fr; height: 494px; align-items: center; color: #4a4a4a; font: 11px/22px "Noto Sans CJK SC", sans-serif; }
.text .in { padding-left: 25px; }
.text .last { text-align-last: left; }
.page .tight { font-feature-settings: "halt"; }
.text em { color: #f00; font-style: normal; }
.arrow { position: absolute; left: 20px; top: 160px; }

/* scroll bar */
.scroll { width: 15px; flex: none; display: flex; flex-direction: column; align-items: center; padding-top: 4px; background: #d7d7d7; border-right: 1px solid #e3e3e3; }
.track { flex: 1; width: 14px; margin-top: 2px; padding-top: 8px; display: flex; flex-direction: column; align-items: center; background: #cfcfcf; }
.thumb { width: 14px; height: 387px; margin-top: 9px; border: 1px solid #999; border-radius: 7px; background: #e8e8e8; }
.jump { margin-top: auto; padding-bottom: 7px; display: flex; flex-direction: column; gap: 11px; }

/* style panel */
.panel { width: 260px; flex: none; padding: 0 12px 24px; display: flex; flex-direction: column; background: #e3e3e3; }
.panel header { display: flex; align-items: center; gap: 5px; height: 30px; margin-left: -3px; }
.panel header button { margin-left: auto; margin-right: -6px; color: #777; }
.current { height: 32px; margin-top: 9px; border: 1px solid #c8c8c8; border-radius: 3px; background: #fff; font-size: 21px; font-weight: bold; }
.current select { padding-left: 6px; color: #000; }
.current .caret { margin-right: 8px; }
.acts { display: flex; gap: 10px; margin-top: 7px; }
.acts button { width: 78px; height: 23px; border: 1px solid #c8c8c8; border-radius: 2px; background: #fff; color: #666; }
.panel h2 { margin-top: 20px; color: #3f6fc4; font-size: 14px; line-height: 20px; font-weight: normal; }
.panel ul { flex: 1; margin-top: 6px; padding: 2px 12px 0 2px; border: 1px solid #c8c8c8; border-radius: 3px; background: #fff; }
.panel li { display: flex; align-items: center; height: 34px; padding: 0 5px 0 3px; color: #000; font-size: 16px; border: 1px solid transparent; white-space: pre; }
.panel li svg { width: 10px; height: 9px; margin-left: auto; margin-bottom: 6px; }
.panel li u { margin-left: auto; margin-bottom: 6px; font: bold 10px "Liberation Sans", sans-serif; }
.panel .h1, .panel .h2 { font-size: 21px; font-weight: bold; }
.panel .h3 { font-size: 20px; font-weight: bold; }
.panel .h4 { font-size: 18px; font-weight: bold; }
.panel .df { font-size: 13px; }
.panel .sel { border-color: #8fb0dc; }
.show { display: flex; align-items: center; justify-content: space-between; margin-top: 7px; }
.show .pick { width: 203px; height: 23px; border: 1px solid #c8c8c8; border-radius: 4px; background: #fff; }

/* right rail */
.rail { width: 36px; flex: none; display: flex; flex-direction: column; align-items: center; gap: 12px; padding-top: 11px; background: #d7d7d7; }
.rail .grip { margin-bottom: 3px; }
.rail button { width: 24px; height: 24px; border-radius: 4px; }
.rail .on { background: #adadad; }
.rail hr { width: 16px; height: 1px; margin: 0 0 10px; border: 0; background: #bbb; }

/* status bar */
.status { display: flex; align-items: center; height: 29px; flex: none; border-top: 1px solid #cfcfcf; padding-right: 15px; color: #555; }
.status > span { height: 25px; display: flex; align-items: center; padding: 0 6px 0 10px; border-right: 1px solid #d2d2d2; white-space: nowrap; }
.status > .c1 { padding: 0 8px 0 8px; }
.status b { font-weight: normal; margin-left: 16px; }
.status > .cert { border: 0; gap: 5px; padding-left: 13px; }
.views { margin-left: auto; display: flex; gap: 2px; padding-right: 9px; border-right: 1px solid #ccc; }
.views button { width: 24px; height: 24px; border-radius: 4px; }
.views .on { background: #bababa; }
.zoom { display: flex; align-items: center; padding-left: 11px; gap: 10px; }
.pct { gap: 3px; color: #333; font: 12px "Noto Sans", sans-serif; }
.zoom input { appearance: none; width: 144px; height: 14px; margin: 0 -5px 0 0; background: linear-gradient(#888, #888) 68px 50% / 1px 6px no-repeat, linear-gradient(#777, #777) 0 50% / 100% 1px no-repeat; }
.zoom input::-webkit-slider-thumb { appearance: none; width: 12px; height: 12px; border: 1px solid #444; border-radius: 50%; background: #e8e8e8; }
.fit { margin-left: 3px; }

/* network meter floating over the desktop */
.meter { position: absolute; right: 17px; bottom: 128px; width: 120px; height: 60px; display: flex; align-items: center; justify-content: flex-end; }
.meter dl { width: 78px; height: 42px; display: grid; grid-template-columns: 8px 1fr; column-gap: 8px; align-items: center; padding-left: 21px; border-radius: 0 21px 21px 0; background: #30333c; box-shadow: 0 0 6px #888; color: #fff; font: 12px/18px "Noto Sans CJK SC", sans-serif; }
.meter dl small { font-size: 10px; color: #aaa; }
.dial { position: absolute; left: 0; top: 0; width: 60px; height: 60px; color: #fff; border-radius: 50%; box-shadow: 0 0 6px #888; }
.dial span { position: absolute; left: 13px; top: 17px; font: 300 23px/24px "Noto Sans CJK SC", sans-serif; }
.dial small { font-size: 10px; }

/* input method bar */
.ime { position: absolute; right: 38px; bottom: 104px; width: 127px; height: 26px; display: flex; align-items: center; justify-content: space-between; padding: 0 5px 0 10px; border: 1px solid #b4c8e6; background: #fff; }
.sogou { position: absolute; left: -27px; top: -5px; }
.ime b { color: #0a6edb; font-size: 15px; }

/* site mark */
.brand { position: absolute; right: 10px; bottom: 9px; display: flex; align-items: center; opacity: .9; }
.brand p { display: flex; flex-direction: column; }
.brand b { color: #4b86d0; font-size: 21px; line-height: 26px; }
.brand a { color: #5cb36e; font: bold 16px/18px "Noto Sans", sans-serif; text-decoration: none; }
```
